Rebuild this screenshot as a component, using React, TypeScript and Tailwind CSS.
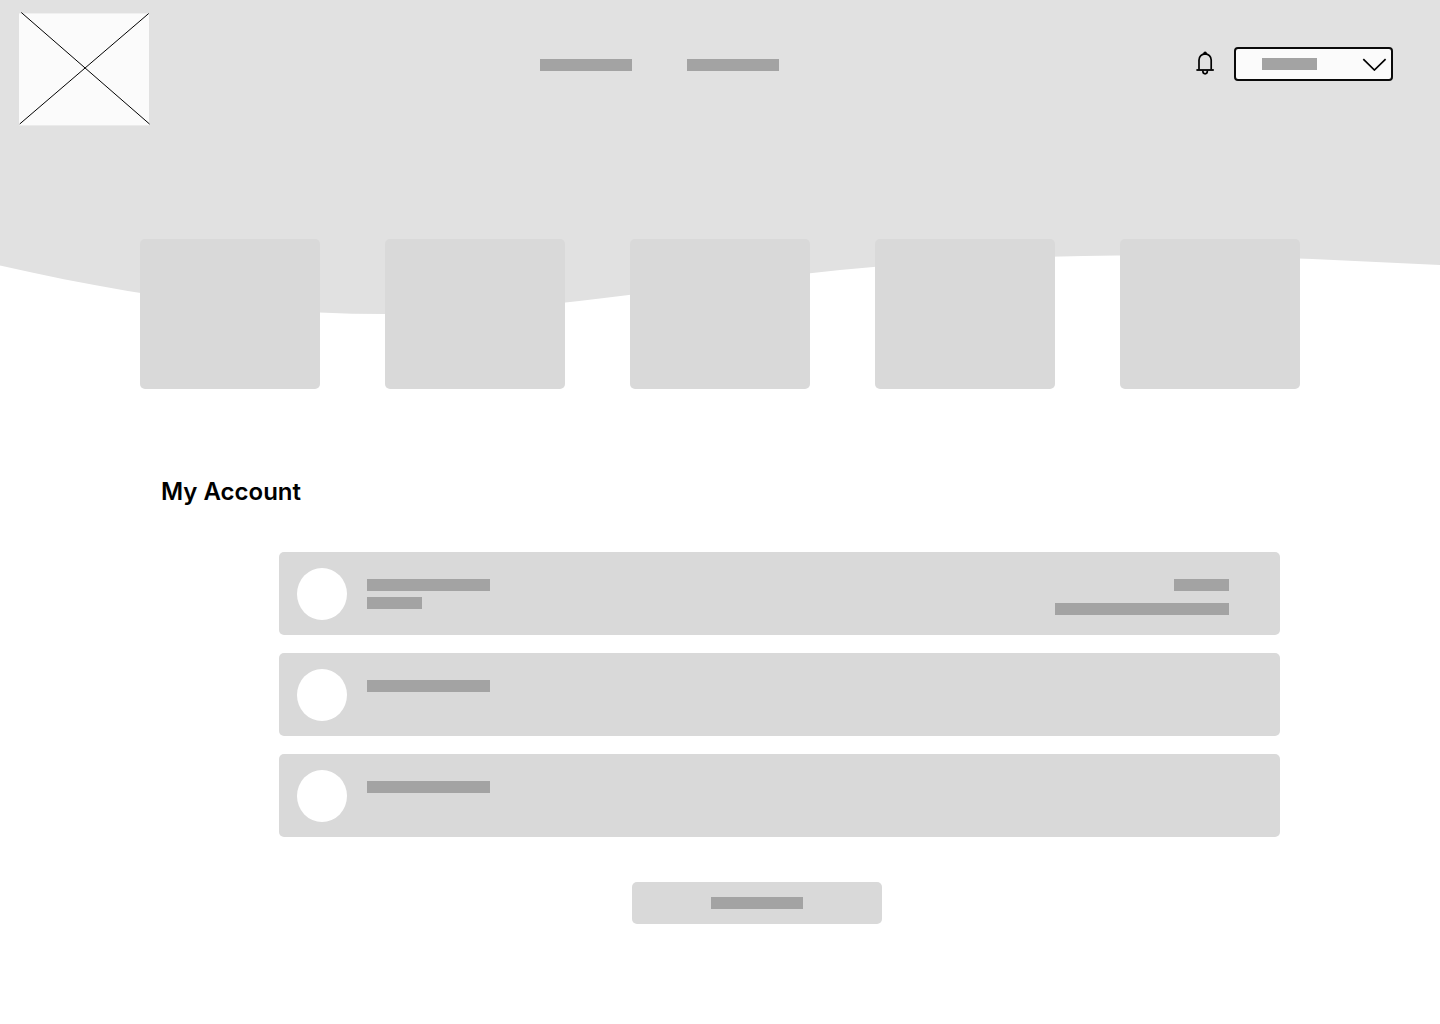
import React from "react";

function Bar({ className }: { className: string }) {
  return <span aria-hidden="true" className={`block h-3 bg-[#a3a3a3] ${className}`} />;
}

function Wave() {
  return (
    <svg
      aria-hidden="true"
      className="absolute inset-x-0 top-0 -z-10 h-[314px] w-full"
      viewBox="0 0 1440 314"
      preserveAspectRatio="none"
    >
      <path
        fill="#e1e1e1"
        d="M0 0H1440V265C1343 260.2 1247 255.2 1150 255.2C1047 255.2 943 259.7 840 270C760 278.2 680 288.9 600 298.5C528 307.1 457 314 385 314C257 314 128 294.6 0 265.5Z"
      />
    </svg>
  );
}

function Logo() {
  return (
    <svg width="130" height="112" viewBox="0 0 130 112" className="overflow-visible" aria-hidden="true">
      <rect y="0.4" width="130" height="112" fill="#fbfbfb" />
      <path d="M2.3 -0.5L130.5 111M129.7 0.5L0.7 111" stroke="#000" strokeWidth="1" fill="none" />
    </svg>
  );
}

function BellIcon() {
  return (
    <svg width="18" height="24" viewBox="0 0 18 24" fill="none" stroke="#000" aria-hidden="true">
      <path d="M3 18.5V9A6.1 6.1 0 0 1 15.2 9V18.5" strokeWidth="1.7" />
      <path d="M0.4 19H17.8" strokeWidth="1.8" />
      <path d="M6.9 19.5V20.6A2.2 2.2 0 0 0 11.3 20.6V19.5" strokeWidth="1.7" />
      <circle cx="9.1" cy="2.2" r="1.8" fill="#000" stroke="none" />
    </svg>
  );
}

function Header() {
  return (
    <header className="flex items-start pt-[13px] pr-[47px] pl-[19px]">
      <a href="#home" aria-label="Home">
        <Logo />
      </a>
      <nav aria-label="Main" className="flex flex-1 justify-center gap-[55px] pt-[46px] pr-[26px]">
        <a href="#first" aria-label="First section">
          <Bar className="w-[92px]" />
        </a>
        <a href="#second" aria-label="Second section">
          <Bar className="w-[92px]" />
        </a>
      </nav>
      <div className="flex items-center gap-5 pt-[34px]">
        <button type="button" aria-label="Notifications" className="pb-[2px]">
          <BellIcon />
        </button>
        <button
          type="button"
          aria-label="Account menu"
          aria-haspopup="menu"
          className="flex h-[34px] w-[159px] items-center justify-between rounded-[4px] border-2 border-[#0a0a0a] bg-[#fbfbfb] pr-1 pl-[26px]"
        >
          <Bar className="w-[55px]" />
          <svg width="25" height="14" viewBox="0 0 25 14" fill="none" stroke="#000" strokeWidth="1.7" aria-hidden="true">
            <path d="M1.3 2.2L12.4 13L23.6 2.2" />
          </svg>
        </button>
      </div>
    </header>
  );
}

const rows = [
  { id: "first", detailed: true },
  { id: "second", detailed: false },
  { id: "third", detailed: false },
];

export default function App() {
  return (
    <div className="relative isolate min-h-screen bg-white pb-[100px] font-['Inter',sans-serif] text-black">
      <Wave />
      <Header />
      <main>
        <section aria-label="Highlights" className="mx-auto mt-[114px] grid max-w-[1160px] grid-cols-5 gap-[65px]">
          {["a", "b", "c", "d", "e"].map((id) => (
            <div key={id} className="h-[150px] rounded-[5px] bg-[#d9d9d9]" />
          ))}
        </section>
        <section aria-labelledby="account-title" className="mx-auto mt-[87px] max-w-[1120px]">
          <h1
            id="account-title"
            className="pl-px text-2xl leading-8 font-semibold [font-optical-sizing:none]"
          >
            My Account
          </h1>
          <div className="mt-11 pl-[119px]">
            <ul className="flex flex-col gap-[18px]">
              {rows.map((row) => (
                <li key={row.id} className="flex h-[83px] items-start rounded-[5px] bg-[#d9d9d9] pr-[51px] pl-[18px]">
                  <span className="mt-4 h-[52px] w-[50px] rounded-[50%] bg-white" />
                  <div className="ml-5 flex flex-col gap-[6px] pt-[27px]">
                    <Bar className="w-[123px]" />
                    {row.detailed && <Bar className="w-[55px]" />}
                  </div>
                  {row.detailed && (
                    <div className="ml-auto flex flex-col items-end gap-3 pt-[27px]">
                      <Bar className="w-[55px]" />
                      <Bar className="w-[174px]" />
                    </div>
                  )}
                </li>
              ))}
            </ul>
            <div className="mt-[45px] flex justify-center pr-[45px]">
              <button
                type="button"
                aria-label="Continue"
                className="flex h-[42px] w-[250px] items-center justify-center rounded-[5px] bg-[#d9d9d9]"
              >
                <Bar className="w-[92px]" />
              </button>
            </div>
          </div>
        </section>
      </main>
    </div>
  );
}
